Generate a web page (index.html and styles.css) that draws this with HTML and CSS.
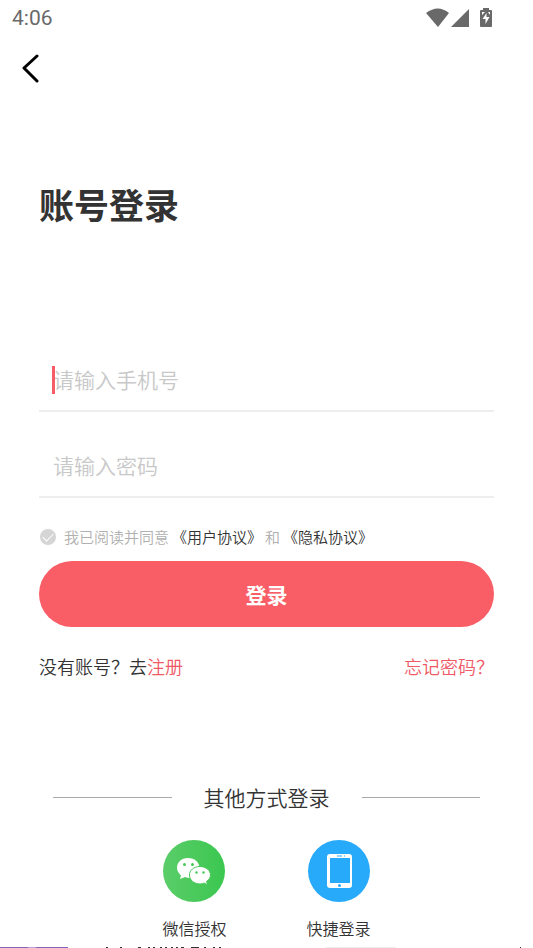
FILE: index.html
```html
<!DOCTYPE html>
<html lang="zh-CN">
<head>
<meta charset="utf-8">
<meta name="viewport" content="width=device-width, initial-scale=1">
<title>账号登录</title>
<link rel="stylesheet" href="styles.css">
</head>
<body>
<div class="status">
  <span>4:06</span>
  <div class="status-icons">
    <svg width="24" height="20" viewBox="0 0 24 20"><path d="M0 5Q12-4 23 5L12 19Z"/></svg>
    <svg width="18" height="20" viewBox="0 0 18 20"><path d="M18 1V19H0Z"/></svg>
    <svg class="battery" width="12" height="20" viewBox="0 0 12 20"><path fill-rule="evenodd" d="M3 2V0H9V2H11Q12 2 12 3V18Q12 19 11 19H1Q0 19 0 18V3Q0 2 1 2ZM6.500 5L2.500 11H5.500V16L9.500 9H6.500ZM2 4V7L5 4ZM8 4L10 7V4Z"/></svg>
  </div>
</div>
<button class="back" type="button" aria-label="返回"><svg width="20" height="30" viewBox="0 0 20 30"><path d="M17 3L4 15L17 28"/></svg></button>
<main>
  <h1>账号登录</h1>
  <form>
    <div class="field focused"><input type="tel" aria-label="手机号" placeholder="请输入手机号"></div>
    <div class="field"><input type="password" aria-label="密码" placeholder="请输入密码"></div>
    <div class="agree">
      <input type="checkbox" id="agree">
      <label for="agree">我已阅读并同意</label>
      <a href="#terms">《用户协议》</a>
      <span>和</span>
      <a href="#privacy">《隐私协议》</a>
    </div>
    <button class="submit" type="submit">登录</button>
  </form>
  <div class="links">
    <span>没有账号？去<a href="#register">注册</a></span>
    <a href="#forgot">忘记密码？</a>
  </div>
  <div class="divider"><span>其他方式登录</span></div>
  <div class="methods">
    <button type="button">
      <svg width="62" height="62" viewBox="0 0 62 62">
        <defs><linearGradient id="wx" x1="0" y1="0" x2="1" y2="0"><stop offset="0" stop-color="#5bcd69"/><stop offset="1" stop-color="#3bc750"/></linearGradient></defs>
        <circle cx="31" cy="31" r="31" fill="url(#wx)"/>
        <path fill="#fff" d="M25 18C18 18 14 22.500 14 28C14 31 16 34 18 35.500L17 39L22 37Q26 38.500 30 37.500C40 35 39 18 25 18Z"/>
        <path fill="#fff" stroke="#45c957" d="M37 26.500C30.500 26.500 26.500 30.500 26.500 35C26.500 40 31 44 37 44Q39.500 44 41 43L44.500 45L43.500 41.500C46 40 47.500 37.500 47.500 35C47.500 30.500 43 26.500 37 26.500Z"/>
        <g fill="#45c957"><circle cx="21.500" cy="24.500" r="1.500"/><circle cx="29.500" cy="24.500" r="1.500"/><circle cx="33.500" cy="32.500" r="1.200"/><circle cx="40.500" cy="32.500" r="1.200"/></g>
      </svg>
      <span>微信授权</span>
    </button>
    <button type="button">
      <svg width="62" height="62" viewBox="0 0 62 62">
        <circle cx="31" cy="31" r="31" fill="#28aafb"/>
        <rect x="19" y="14" width="25" height="34" rx="3" fill="#fff"/>
        <path fill="#28aafb" d="M22 18H42V43H22Z"/>
        <path stroke="#28aafb" d="M29 16H34M36 16H37"/><circle cx="31.500" cy="45.500" r="1.500" fill="#28aafb"/>
      </svg>
      <span>快捷登录</span>
    </button>
  </div>
</main>
<svg class="peek" viewBox="0 0 533 2" preserveAspectRatio="none" aria-hidden="true"><path fill="#8465bb" d="M0 1H68V2H0Z"/><path fill="#b9a2d2" d="M28 1H36V2H28Z"/><path fill="#333" d="M106 1h2v1h-2zM120 1h2v1h-2zM138 1h3v1h-3zM148 1h2v1h-2zM153 1h2v1h-2zM160 1h2v1h-2zM165 1h2v1h-2zM171 1h2v1h-2zM176 1h2v1h-2zM181 1h3v1h-3zM191 1h8v1h-8zM204 1h2v1h-2zM213 1h2v1h-2zM219 1h2v1h-2zM520 1h1v1h-1z"/><path fill="#eee" d="M326 1H396V2H326Z"/></svg>
</body>
</html>
```
FILE: styles.css
```css
* { box-sizing: border-box; }
body {
  margin: 0;
  min-height: 100vh;
  display: flex;
  flex-direction: column;
  overflow: hidden;
  background: #fff;
  color: #333;
  font-family: "Noto Sans CJK SC", sans-serif;
  font-weight: 350;
}
button, input { font: inherit; color: inherit; border: 0; padding: 0; background: none; }
a { color: inherit; text-decoration: none; }
svg { display: block; }
.status {
  display: flex;
  justify-content: space-between;
  align-items: center;
  height: 36px;
  padding: 0 41px 0 12px;
  color: #696969;
  font: 400 21px/38px Roboto, sans-serif;
}
.status-icons { display: flex; gap: 1px; fill: #696969; }
.battery { margin-left: 10px; }
.back { width: 40px; height: 32px; margin: 16px 0 0 20px; }
.back svg { fill: none; stroke: #000; stroke-width: 3; stroke-linecap: round; stroke-linejoin: round; }
main { padding: 0 39px; }
h1 { margin: 92px 0 116px; font-size: 35px; line-height: 56px; font-weight: 700; }
.field {
  position: relative;
  height: 64px;
  margin-bottom: 22px;
  padding-left: 14px;
  border-bottom: 2px solid #eee;
}
.field input { width: 100%; height: 62px; font-size: 21px; outline: 0; }
.field input::placeholder { color: #c8c8c8; opacity: 1; }
.focused::before {
  content: "";
  position: absolute;
  left: 13px;
  top: 18px;
  width: 3px;
  height: 28px;
  background: #f65c68;
}
.agree { display: flex; align-items: center; gap: 3px; height: 24px; margin-top: 27px; font-size: 15px; line-height: 24px; color: #b0b0b0; }
.agree a { color: #333; }
.agree input {
  appearance: none;
  width: 18px;
  height: 18px;
  margin: 0 4px 0 0;
  border: 1px solid #fff;
  border-radius: 50%;
  background: #d5d5d5;
  display: grid;
  place-items: center;
}
.agree input::before {
  content: "";
  width: 9px;
  height: 5px;
  margin-bottom: 3px;
  border: solid #fff;
  border-width: 0 0 1px 1px;
  transform: rotate(-45deg);
}
.submit { display: block; width: 100%; height: 66px; margin-top: 12px; border-radius: 33px; background: #f95d66; color: #fff; font-size: 21px; font-weight: 700; }
.links { display: flex; justify-content: space-between; margin-top: 25px; font-size: 18px; line-height: 28px; }
.links a { color: #ee5965; }
.divider { display: flex; align-items: center; gap: 32px; margin: 101px 14px 0; font-size: 21px; line-height: 32px; }
.divider::before, .divider::after { content: ""; flex: 1; height: 1px; background: #aaa; }
.methods { display: flex; justify-content: center; gap: 80px; margin-top: 27px; }
.methods button { display: grid; justify-items: center; gap: 14px; font-size: 16px; line-height: 24px; }
.peek { position: fixed; left: 0; bottom: 0; width: 100%; height: 2px; }
```
